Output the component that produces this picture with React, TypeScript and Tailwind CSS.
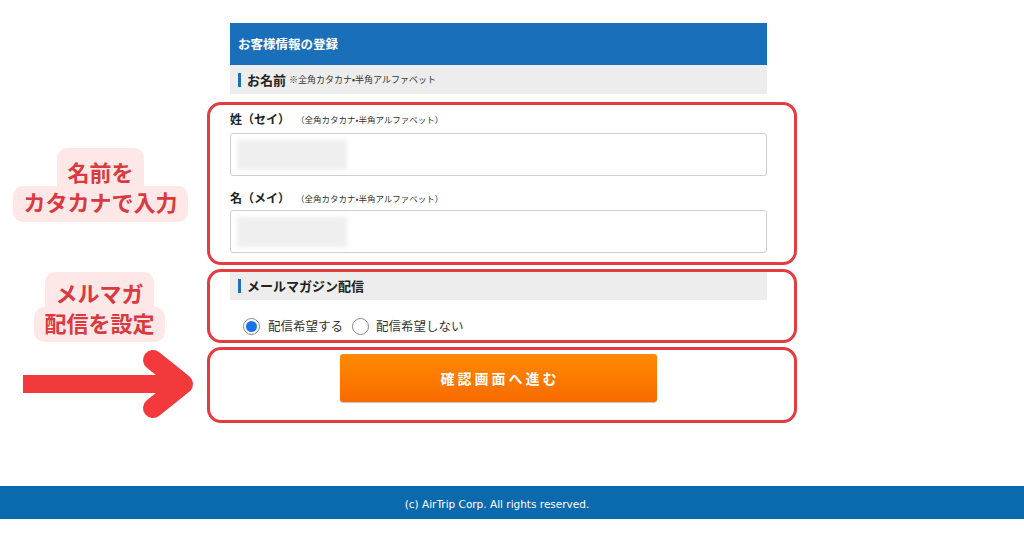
import React from "react";

function Radio({ checked }: { checked: boolean }) {
  return (
    <span className="flex h-[17px] w-[17px] items-center justify-center rounded-full border border-[#8a8a8a] bg-white">
      {checked && <span className="h-[11px] w-[11px] rounded-full bg-[#1a73e8]" />}
    </span>
  );
}

function SectionBar({ title, note }: { title: string; note?: string }) {
  return (
    <div className="flex h-full items-center bg-[#ededed] pl-[8px]">
      <span className="mr-[6px] h-[14px] w-[3px] bg-[#1d6fb8]" />
      <span className="text-[13px] font-bold text-[#222]">{title}</span>
      {note && <span className="ml-[3px] text-[9px] text-[#333]">{note}</span>}
    </div>
  );
}

function NameField({ label }: { label: string }) {
  return (
    <div className="flex h-[16px] items-center">
      <span className="text-[12px] font-bold leading-[16px] text-[#222]">{label}</span>
      <span className="ml-[6px] text-[8.5px] text-[#333]">（全角カタカナ•半角アルファベット）</span>
    </div>
  );
}

function Input({ mt }: { mt: string }) {
  return (
    <div className={`${mt} flex h-[43px] items-center rounded-[3px] border border-[#cfcfcf] bg-white`}>
      <div className="ml-[6px] h-[30px] w-[110px] bg-[#efefef] blur-[2px]" />
    </div>
  );
}

export default function App() {
  return (
    <div
      className="relative flex h-[538px] w-[1024px] flex-col overflow-hidden bg-white"
      style={{ fontFamily: '"Noto Sans CJK JP", "Noto Sans", sans-serif' }}
    >
      <div className="ml-[207px] flex w-[590px] flex-col pt-[23px]">
        <div className="ml-[23px] w-[537px]">
          <div className="flex h-[42px] items-center bg-[#1a6fba] pl-[8px]">
            <span className="text-[12.5px] font-bold text-white">お客様情報の登録</span>
          </div>
          <div className="h-[29px]">
            <SectionBar title="お名前" note="※全角カタカナ•半角アルファベット" />
          </div>
        </div>

        <div className="mt-[8px] flex h-[163px] flex-col rounded-[14px] border-[3px] border-[#e23b40] pl-[20px] pr-[27px] pt-[6px]">
          <NameField label="姓（セイ）" />
          <Input mt="mt-[6px]" />
          <div className="mt-[14px]">
            <NameField label="名（メイ）" />
          </div>
          <Input mt="mt-[4px]" />
        </div>

        <div className="mt-[4px] flex h-[74px] flex-col rounded-[14px] border-[3px] border-[#e23b40] pl-[20px] pr-[27px]">
          <div className="h-[28px]">
            <SectionBar title="メールマガジン配信" />
          </div>
          <div className="mt-[16px] flex h-[20px] items-center pl-[13px] text-[12.5px] text-[#333]">
            <Radio checked />
            <span className="ml-[8px]">配信希望する</span>
            <span className="ml-[9px]">
              <Radio checked={false} />
            </span>
            <span className="ml-[7px]">配信希望しない</span>
          </div>
        </div>

        <div className="mt-[4px] flex h-[76px] justify-center rounded-[14px] border-[3px] border-[#e23b40] pl-[20px] pr-[27px] pt-[4px]">
          <div className="flex h-[48px] w-[317px] items-center justify-center rounded-[3px] bg-gradient-to-b from-[#ff8a00] to-[#f86a00] shadow-[0_1px_1px_rgba(0,0,0,0.25)]">
            <span className="pl-[3px] text-[14px] font-bold tracking-[3px] text-white">確認画面へ進む</span>
          </div>
        </div>
      </div>

      <div className="mt-[63px] flex h-[33px] w-full items-center justify-center bg-[#0b69ad] pr-[30px] pt-[4px]">
        <span className="text-[10.5px] text-white" style={{ fontFamily: '"DejaVu Sans", sans-serif' }}>
          (c) AirTrip Corp. All rights reserved.
        </span>
      </div>

      {/* annotations */}
      <div className="absolute left-0 top-[148px] flex w-[201px] flex-col items-center text-[22px] font-bold text-[#d93a3f]">
        <span className="rounded-t-[10px] bg-[#fde7e7] px-[10px] pt-[8px] leading-[30px]">名前を</span>
        <span className="rounded-[10px] bg-[#fde7e7] px-[10px] pb-[6px] leading-[30px]">カタカナで入力</span>
      </div>
      <div className="absolute left-0 top-[272px] flex w-[199px] flex-col items-center text-[22px] font-bold text-[#d93a3f]">
        <span className="rounded-t-[10px] bg-[#fde7e7] px-[10px] pt-[5px] leading-[30px]">メルマガ</span>
        <span className="rounded-[10px] bg-[#fde7e7] px-[10px] pb-[5px] leading-[30px]">配信を設定</span>
      </div>
      <svg className="absolute left-0 top-[340px]" width="210" height="90" viewBox="0 0 210 90">
        <rect x="23" y="35" width="160" height="18" fill="#f23a3c" />
        <polyline
          points="153,20 183,44 153,68"
          fill="none"
          stroke="#f23a3c"
          strokeWidth="20"
          strokeLinecap="round"
          strokeLinejoin="round"
        />
      </svg>
    </div>
  );
}
